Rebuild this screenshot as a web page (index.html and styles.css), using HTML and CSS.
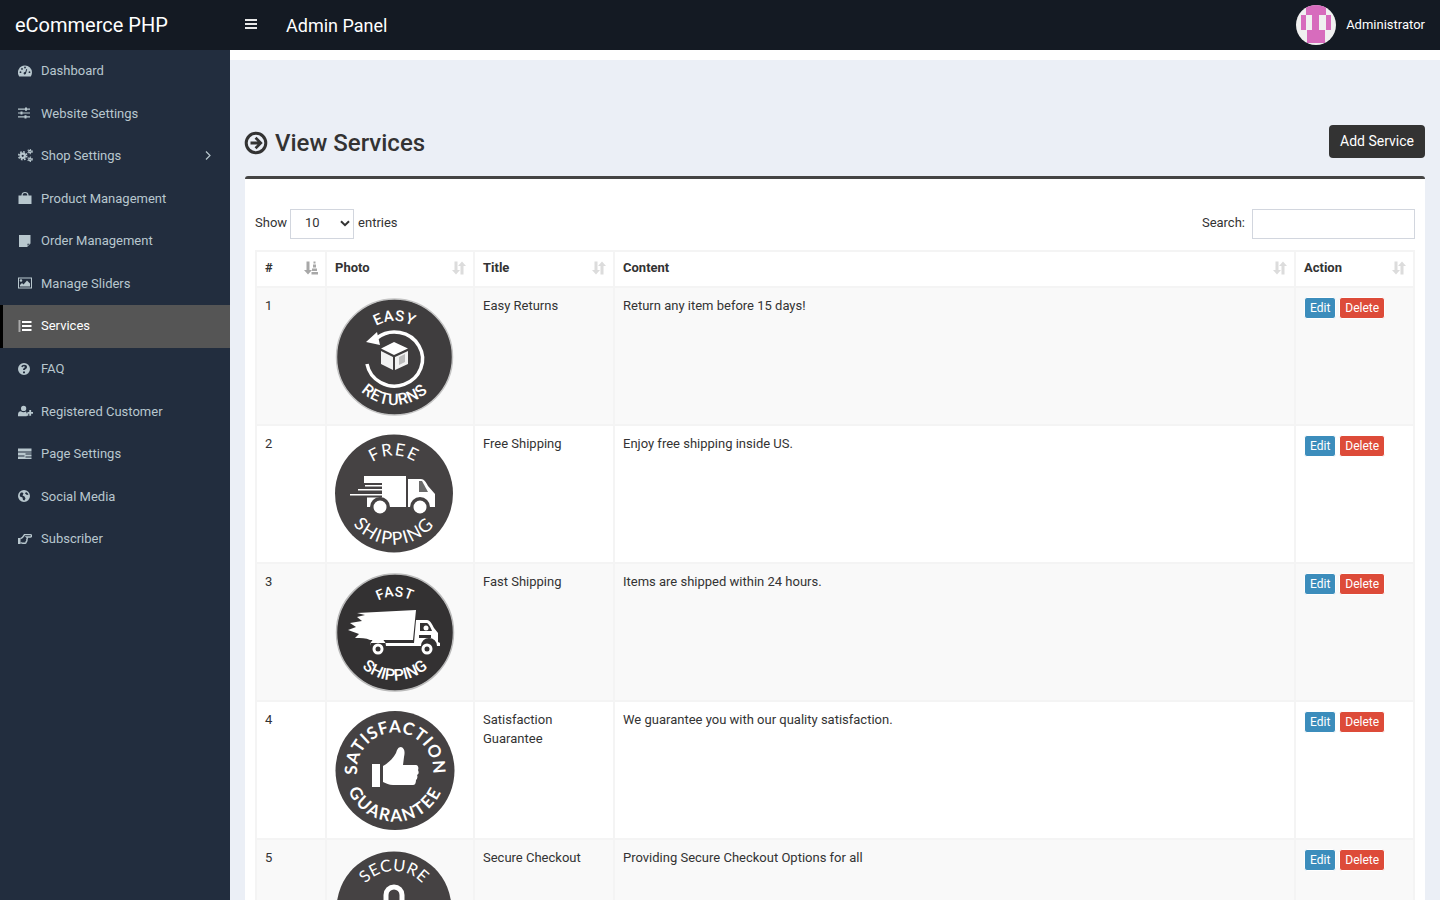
FILE: index.html
```html
<!DOCTYPE html>
<html lang="en">
<head>
    <meta charset="UTF-8">
    <title>View Services</title>
    <link rel="stylesheet" href="styles.css">
</head>
<body>
    <svg class="defs" width="0" height="0">
        <defs>
            <!-- arcs for the badge captions, drawn round 0,0 -->
            <path id="top-36" d="M-33.800 12.300A36 36 0 1 1 33.800 12.300"/>
            <path id="top-38" d="M-35.700 13A38 38 0 1 1 35.700 13"/>
            <path id="bottom-48" d="M-45.100 -16.400A48 48 0 1 0 45.100 -16.400"/>
            <path id="bottom-51" d="M-47.900 -17.400A51 51 0 1 0 47.900 -17.400"/>
            <g id="sort-both">
                <path d="M2.500 .5h3v8.500H8l-4 4.500L0 9h2.500zM10 .5l4 4.500h-2.500v8.500h-3V5H6z"/>
            </g>
        </defs>
    </svg>

    <header class="topbar">
        <div class="logo">eCommerce PHP</div>
        <div class="topbar-main">
            <span class="menu-toggle"><svg width="12" height="12" viewBox="0 0 12 12"><path d="M0 1h12v2H0zM0 5h12v2H0zM0 9h12v2H0z"/></svg></span>
            <span class="panel-title">Admin Panel</span>
            <div class="user">
                <svg class="avatar" width="40" height="40" viewBox="0 0 40 40">
                    <rect width="40" height="40" fill="#f0f0f0"/>
                    <path fill="#d76cbd" d="M10 0h20v10h5v15h-6v13H11V25H5V10h5z"/>
                    <path fill="#f0f0f0" d="M10 10h6v15h-6zM23 10h7v15h-7z"/>
                </svg>
                <span class="user-name">Administrator</span>
            </div>
        </div>
    </header>

    <div class="wrapper">
        <aside class="sidebar">
            <ul class="side-menu">
                <li><svg class="ico" viewBox="0 0 14 12"><path fill-rule="evenodd" d="M7 0.500a7 7 0 0 1 7 7c0 1.500-.4 2.800-1.200 4H1.200A7 7 0 0 1 7 .5zM7 7a1.300 1.300 0 0 0-1 2.200 1.300 1.300 0 0 0 2-1l1.200-4-.9-.2-1 3zM2.500 6.300a.9.9 0 1 0 0 1.800.9.9 0 0 0 0-1.800zM4 3a.9.9 0 1 0 0 1.800A.9.9 0 0 0 4 3zM7 1.600a.9.9 0 1 0 0 1.800.9.9 0 0 0 0-1.800zM11.500 6.300a.9.9 0 1 0 0 1.800.9.9 0 0 0 0-1.800z"/></svg>Dashboard</li>
                <li><svg class="ico" viewBox="0 0 14 12"><path d="M0 1.500h7V.5h2v1h3v1.200H9v1H7v-1H0zM0 5.400h2.500v-1h2v1H12v1.200H4.500v1h-2v-1H0zM0 9.300h6.500v-1h2v1H12v1.200H8.500v1h-2v-1H0z"/></svg>Website Settings</li>
                <li class="has-arrow"><svg class="ico ico-gears" viewBox="0 0 15 13"><g fill="none" stroke="currentColor"><circle cx="4.700" cy="6.800" r="2.200" stroke-width="2.200"/><circle cx="4.700" cy="6.800" r="4" stroke-width="1.600" stroke-dasharray="1.700 1.440"/><circle cx="12" cy="2.500" r="1.200" stroke-width="1.300"/><circle cx="12" cy="2.500" r="2.200" stroke-width="1.100" stroke-dasharray="1.100 1.200"/><circle cx="12" cy="10.300" r="1.200" stroke-width="1.300"/><circle cx="12" cy="10.300" r="2.200" stroke-width="1.100" stroke-dasharray="1.100 1.200"/></g></svg>Shop Settings<svg class="arrow" width="6" height="9" viewBox="0 0 6 9"><path d="M1 .5l4 4-4 4" fill="none" stroke="currentColor" stroke-width="1.200"/></svg></li>
                <li><svg class="ico" viewBox="0 0 14 12"><path d="M3.500 3.500V3C3.500 1.200 5 0 7 0s3.500 1.200 3.500 3v.5h3V12H.5V3.500zm1.200 0h4.600V3C9.300 1.900 8.300 1.100 7 1.100S4.700 1.900 4.700 3z"/></svg>Product Management</li>
                <li><svg class="ico" viewBox="0 0 14 12"><path d="M1 0h11.500v8.500L9 12H1zM9.500 8.800v2l2-2z"/></svg>Order Management</li>
                <li><svg class="ico" viewBox="0 0 14 12"><path fill-rule="evenodd" d="M0 .5h14v11H0zm1 1v9h12v-9zm2 .7a1.300 1.300 0 1 1 0 2.600 1.300 1.300 0 0 1 0-2.600zM2 9.500V8l2-2 1.500 1.500 3.500-4 3 3v3z"/></svg>Manage Sliders</li>
                <li class="active"><svg class="ico" viewBox="0 0 14 12"><path d="M4 1h9.500v2H4zM4 5h9.500v2H4zM4 9h9.500v2H4zM.5 .5h2v1h-2zM.5 2.500h2v1h-2zM.5 4.500h2v1h-2zM.5 6.500h2v1h-2zM.5 8.500h2v1h-2zM.5 10.500h2v1h-2z"/></svg>Services</li>
                <li><svg class="ico" viewBox="0 0 14 12"><path fill-rule="evenodd" d="M6 0a6 6 0 1 1 0 12A6 6 0 0 1 6 0zM5 8.500v1.700h2V8.500zM6 1.800C4.600 1.800 3.700 2.500 3.300 3.700l1.300.6c.3-.7.700-1 1.300-1 .6 0 1 .3 1 .7 0 .5-.4.700-.9 1-.6.400-1 .9-1 1.700v.4h2v-.3c0-.4.300-.6.700-.9.700-.4 1.300-1 1.300-2 0-1.300-1.100-2.100-3-2.100z"/></svg>FAQ</li>
                <li><svg class="ico ico-wide" viewBox="0 0 16 12"><path d="M6 .5a2.800 2.800 0 1 1 0 5.600A2.800 2.800 0 0 1 6 .5zM0 11.500V10c0-2.500 1.300-3.700 3-3.700.800.600 1.800 1 3 1 1 0 1.700-.3 2.400-.7l.6.400v1.500h2v2.500H9.300v.5zM12 5h2v2h2v2h-2v2h-2V9h-2V7h2z"/></svg>Registered Customer</li>
                <li><svg class="ico" viewBox="0 0 14 12"><path fill-rule="evenodd" d="M0 .5h13.500v3H0zM0 4.500h13.500V11H0zm7.500 1v1h6v-1zM0 7.500v1h6.500v-1zm7.500 1v1h6v-1z"/></svg>Page Settings</li>
                <li><svg class="ico" viewBox="0 0 14 12"><path fill-rule="evenodd" d="M6 0a6 6 0 1 1 0 12A6 6 0 0 1 6 0zm-3 2.500C2 3.500 1.500 5 2 6.500l2.500 1 .5 2.500 1.500.5 1-2-1-2-2-1 1-2-1-1zm5-.5L7 3.500l2 1.500 1.500-.5C10 3.500 9 2.500 8 2z"/></svg>Social Media</li>
                <li><svg class="ico" viewBox="0 0 14 12"><path d="M0 5h2.500v6H0z"/><path fill="none" stroke="currentColor" stroke-width="1.400" d="M2.500 5.700C4 5 5.500 3.500 6.500 1.600h5.800a1.100 1.100 0 0 1 0 2.400H8.600c.8.600.8 2 .2 2.600.3.800 0 1.600-.6 2 .1.900-.3 1.500-1 1.700H4.700c-.9 0-1.400-.5-2.200-.7"/></svg>Subscriber</li>
            </ul>
        </aside>

        <main class="content">
            <div class="content-strip"></div>
            <div class="content-header">
                <h1>
                    <svg width="24" height="24" viewBox="0 0 24 24"><circle cx="12" cy="12" r="9.800" fill="none" stroke="#333" stroke-width="3"/><path fill="#333" d="M12.500 5.800l6.200 6.200-6.200 6.200-1.900-1.900 2.900-2.900H6.500v-2.800h7l-2.900-2.900z"/></svg>
                    View Services
                </h1>
                <a class="btn-add">Add Service</a>
            </div>

            <section class="box">
                <div class="table-tools">
                    <div class="length">
                        Show
                        <span class="select">10
                            <svg width="10" height="7" viewBox="0 0 10 7"><path d="M1 1.200l4 4 4-4" fill="none" stroke="#333" stroke-width="2"/></svg>
                        </span>
                        entries
                    </div>
                    <div class="search">Search: <span class="search-input"></span></div>
                </div>

                <table class="services">
                    <thead>
                        <tr>
                            <th class="col-num">#<svg class="sort sorted" viewBox="0 0 14 14"><path d="M2.500 .5h3v8.500H8l-4 4.500L0 9h2.500z"/><path d="M9.500 .5h2v2h-2zM9 3.500h3v3H9zM8 7.500h5V10H8zM7.500 11h6.500v2.500H7.500z"/></svg></th>
                            <th class="col-photo">Photo<svg class="sort" viewBox="0 0 14 14"><use href="#sort-both"/></svg></th>
                            <th class="col-title">Title<svg class="sort" viewBox="0 0 14 14"><use href="#sort-both"/></svg></th>
                            <th>Content<svg class="sort" viewBox="0 0 14 14"><use href="#sort-both"/></svg></th>
                            <th class="col-action">Action<svg class="sort" viewBox="0 0 14 14"><use href="#sort-both"/></svg></th>
                        </tr>
                    </thead>
                    <tbody>
                        <tr>
                            <td>1</td>
                            <td>
                                <svg class="badge" viewBox="0 0 120 120">
                                    <circle cx="59.500" cy="61" r="58" fill="#3f3d3e" stroke="#c4c4c4" stroke-width="1.500"/>
                                    <g transform="translate(59.500 61)">
                                        <text class="badge-text" font-size="15" letter-spacing=".5"><textPath href="#top-36" startOffset="50%" text-anchor="middle">EASY</textPath></text>
                                        <text class="badge-text" font-size="16" letter-spacing=".5"><textPath href="#bottom-48" startOffset="50%" text-anchor="middle">RETURNS</textPath></text>
                                    </g>
                                    <path d="M42 42A28 27 0 1 1 32 68" fill="none" stroke="#fff" stroke-width="3.500"/>
                                    <path fill="#fff" d="M31 46l11-10 3 13zM59 46l14 6.500-14 6.500-13-6.500z"/>
                                    <path fill="#f2f2f2" d="M46 55l12 6v13l-12-6zM60 61l13-6v13l-13 6z"/>
                                    <path fill="#bdbdbd" d="M64 61l6-3v8l-6 3z"/>
                                </svg>
                            </td>
                            <td>Easy Returns</td>
                            <td>Return any item before 15 days!</td>
                            <td class="actions"><a class="btn-edit">Edit</a><a class="btn-delete">Delete</a></td>
                        </tr>
                        <tr>
                            <td>2</td>
                            <td>
                                <svg class="badge" viewBox="0 0 120 120">
                                    <circle cx="59" cy="59.500" r="59" fill="#454243"/>
                                    <g transform="translate(59 59.500)">
                                        <text class="badge-text badge-light" font-size="17" letter-spacing="1.500"><textPath href="#top-38" startOffset="50%" text-anchor="middle">FREE</textPath></text>
                                        <text class="badge-text badge-light" font-size="18" letter-spacing="1.500"><textPath href="#bottom-51" startOffset="50%" text-anchor="middle">SHIPPING</textPath></text>
                                    </g>
                                    <path fill="#fff" d="M29 42h42v7H29zM47 49h24v24H47zM30 51h17v1.500H30zM23 55h24v1.500H23zM15 60h32v1.500H15zM32 63.500h15V73H32zM73 45h13c3 0 5 3 7 7l7 8v13H73z"/>
                                    <path fill="#6b6b6b" d="M84 47h3l6 11h-9z"/>
                                    <circle cx="45" cy="73" r="10" fill="#454243"/><circle cx="85" cy="73" r="10" fill="#454243"/>
                                    <circle cx="45" cy="73" r="6.500" fill="#fff"/><circle cx="85" cy="73" r="6.500" fill="#fff"/>
                                </svg>
                            </td>
                            <td>Free Shipping</td>
                            <td>Enjoy free shipping inside US.</td>
                            <td class="actions"><a class="btn-edit">Edit</a><a class="btn-delete">Delete</a></td>
                        </tr>
                        <tr>
                            <td>3</td>
                            <td>
                                <svg class="badge" viewBox="0 0 120 120">
                                    <circle cx="60" cy="60.500" r="58.500" fill="#333132" stroke="#bbb" stroke-width="1.500"/>
                                    <g transform="translate(60 60.500)">
                                        <text class="badge-text" font-size="14" letter-spacing=".5"><textPath href="#top-36" startOffset="50%" text-anchor="middle">FAST</textPath></text>
                                        <text class="badge-text" font-size="16"><textPath href="#bottom-48" startOffset="50%" text-anchor="middle">SHIPPING</textPath></text>
                                    </g>
                                    <path fill="#fff" d="M22 41l59-3-3 30H35c-4-2-9-2-15-2l4-4-11-4 8-3-6-4 12-2-5-4 8-2z"/>
                                    <path fill="#fff" d="M81 48h11c3 0 5 4 7 8l4 5v9l2 1v3h-3a8 8 0 0 0-16 0H51a8 8 0 0 0-16 0v-3h44z"/>
                                    <path fill="#333132" d="M85 51h7c2 1 4 5 5 8H85zM84 63h12v3H84z"/>
                                    <circle cx="91" cy="56" r="2.500" fill="#fff"/>
                                    <circle cx="43" cy="77" r="5.500" fill="#fff"/><circle cx="43" cy="77" r="2.500" fill="#333132"/>
                                    <circle cx="92" cy="77" r="5.500" fill="#fff"/><circle cx="92" cy="77" r="2.500" fill="#333132"/>
                                </svg>
                            </td>
                            <td>Fast Shipping</td>
                            <td>Items are shipped within 24 hours.</td>
                            <td class="actions"><a class="btn-edit">Edit</a><a class="btn-delete">Delete</a></td>
                        </tr>
                        <tr>
                            <td>4</td>
                            <td>
                                <svg class="badge" viewBox="0 0 120 120">
                                    <circle cx="60" cy="60.500" r="59.500" fill="#454243"/>
                                    <g transform="translate(60 60.500)">
                                        <text class="badge-text badge-light badge-heavy" font-size="17" letter-spacing=".8"><textPath href="#top-38" startOffset="50%" text-anchor="middle">SATISFACTION</textPath></text>
                                        <text class="badge-text badge-light badge-heavy" font-size="17" letter-spacing="1.800"><textPath href="#bottom-51" startOffset="50%" text-anchor="middle">GUARANTEE</textPath></text>
                                    </g>
                                    <path fill="#fff" d="M37 54h8v23h-8zM48 56c5-3 10-7 13-13 1-3 2-6 5-6 4 1 4 6 3 10l-1 8h13c2 0 3 3 2 5 1 2 1 4-1 5 1 2 0 4-1 5 0 3-1 5-3 5H58c-4 0-7-2-10-3z"/>
                                </svg>
                            </td>
                            <td>Satisfaction<br>Guarantee</td>
                            <td>We guarantee you with our quality satisfaction.</td>
                            <td class="actions"><a class="btn-edit">Edit</a><a class="btn-delete">Delete</a></td>
                        </tr>
                        <tr>
                            <td>5</td>
                            <td>
                                <svg class="badge" viewBox="0 0 120 120">
                                    <circle cx="59" cy="61" r="57.500" fill="#454243"/>
                                    <g transform="translate(59 61)">
                                        <text class="badge-text badge-light" font-size="16.500" letter-spacing=".5"><textPath href="#top-38" startOffset="50%" text-anchor="middle">SECURE</textPath></text>
                                    </g>
                                    <path d="M51 60V47a8 8 0 0 1 16 0v13" fill="none" stroke="#fff" stroke-width="5"/>
                                </svg>
                            </td>
                            <td>Secure Checkout</td>
                            <td>Providing Secure Checkout Options for all</td>
                            <td class="actions"><a class="btn-edit">Edit</a><a class="btn-delete">Delete</a></td>
                        </tr>
                    </tbody>
                </table>
            </section>
        </main>
    </div>
</body>
</html>
```
FILE: styles.css
```css
html, body {
    height: 100%;
    overflow: hidden;
}
body {
    margin: 0;
    font-family: Roboto, "Liberation Sans", sans-serif;
    font-size: 13px;
    color: #333;
    background-color: #ebeff6;
}
.defs {
    position: absolute;
}
.topbar {
    display: flex;
    height: 50px;
    background-color: #141a23;
    color: white;
}
.logo {
    width: 230px;
    padding-left: 15px;
    box-sizing: border-box;
    font-size: 20px;
    line-height: 50px;
}
.topbar-main {
    flex: 1;
    display: flex;
    align-items: center;
    padding-right: 15px;
}
.menu-toggle {
    display: flex;
    margin-left: 15px;
    margin-bottom: 2px;
    fill: #e8e8e8;
}
.panel-title {
    margin-left: 29px;
    font-size: 18px;
}
.user {
    margin-left: auto;
    display: flex;
    align-items: center;
    gap: 10px;
}
.user-name {
    padding-bottom: 2px;
}
.avatar {
    border-radius: 50%;
}
.wrapper {
    display: flex;
    height: calc(100vh - 50px);
}
.sidebar {
    width: 230px;
    flex-shrink: 0;
    background-color: #222d3e;
}
.side-menu {
    list-style: none;
    margin: 0;
    padding: 0;
}
.side-menu li {
    display: flex;
    align-items: center;
    height: 42.55px;
    padding-left: 18px;
    padding-bottom: 1.2px;
    box-sizing: border-box;
    color: #b8c7ce;
}
.side-menu li.active {
    background-color: #555;
    border-left: 3px solid #000;
    padding-left: 15px;
    color: white;
}
.ico {
    width: 14px;
    height: 12px;
    margin-right: 9px;
    fill: currentColor;
    flex-shrink: 0;
}
.ico-wide {
    width: 15px;
    margin-right: 8px;
}
.ico-gears {
    width: 15px;
    height: 13px;
    margin-right: 8px;
}
.arrow {
    margin-left: auto;
    margin-right: 19px;
}
.content {
    flex: 1;
    min-width: 0;
}
.content-strip {
    height: 10px;
    background-color: white;
}
.content-header {
    display: flex;
    justify-content: space-between;
    align-items: center;
    padding: 65px 15px 0;
    height: 33px;
    margin-bottom: 18px;
}
.content-header h1 {
    display: flex;
    align-items: center;
    gap: 7px;
    margin: 3px 0 0 -1px;
    font-size: 24px;
    font-weight: 500;
    color: #333;
}
.btn-add {
    padding: 0 11px;
    line-height: 33px;
    background-color: #333;
    color: white;
    border-radius: 4px;
    font-size: 14px;
}
.box {
    margin: 0 15px;
    padding: 30px 10px 0;
    background: white;
    border-top: 3px solid #444;
    border-radius: 3px;
}
.table-tools {
    display: flex;
    justify-content: space-between;
    height: 30px;
    margin-bottom: 11px;
}
.length, .search {
    display: flex;
    align-items: flex-start;
    line-height: 28px;
}
.select {
    display: flex;
    align-items: center;
    justify-content: space-between;
    width: 64px;
    height: 30px;
    margin: 0 4px 0 3px;
    padding: 0 3px 2px 14px;
    box-sizing: border-box;
    border: 1px solid #d2d6de;
}
.search-input {
    width: 163px;
    height: 30px;
    margin-left: 7px;
    box-sizing: border-box;
    border: 1px solid #d2d6de;
}
.services {
    width: 100%;
    border-collapse: collapse;
    table-layout: fixed;
}
.services th, .services td {
    border: 2px solid #f4f4f4;
    padding: 8px;
    text-align: left;
    vertical-align: top;
    line-height: 19px;
}
.services th {
    position: relative;
    height: 20px;
    padding-top: 7px;
    padding-bottom: 7px;
    line-height: 17px;
    font-weight: 700;
    color: #333;
}
.services tbody tr:nth-child(odd) {
    background-color: #f9f9f9;
}
.col-num { width: 52px; }
.col-photo { width: 130px; }
.col-title { width: 122px; }
.col-action { width: 101px; }
.sort {
    position: absolute;
    right: 7px;
    top: 9px;
    width: 14px;
    height: 14px;
    fill: #dcdcdc;
}
.sort.sorted {
    fill: #a8a8a8;
}
.badge {
    display: block;
    width: 120px;
    height: 120px;
}
.badge-text {
    fill: white;
    font-family: Roboto, sans-serif;
    font-weight: 500;
}
.badge-light {
    font-family: Lato, sans-serif;
    font-weight: 400;
}
.badge-heavy {
    font-weight: 700;
}
.actions a {
    display: inline-block;
    height: 20px;
    padding: 0 5px;
    line-height: 20px;
    margin-top: 1px;
    border: 1px solid;
    border-radius: 3px;
    font-size: 12px;
    color: white;
}
.btn-edit {
    background-color: #3c8dbc;
    border-color: #367fa9;
    margin-right: 3px;
}
.btn-delete {
    background-color: #dd4b39;
    border-color: #d73925;
}
```
